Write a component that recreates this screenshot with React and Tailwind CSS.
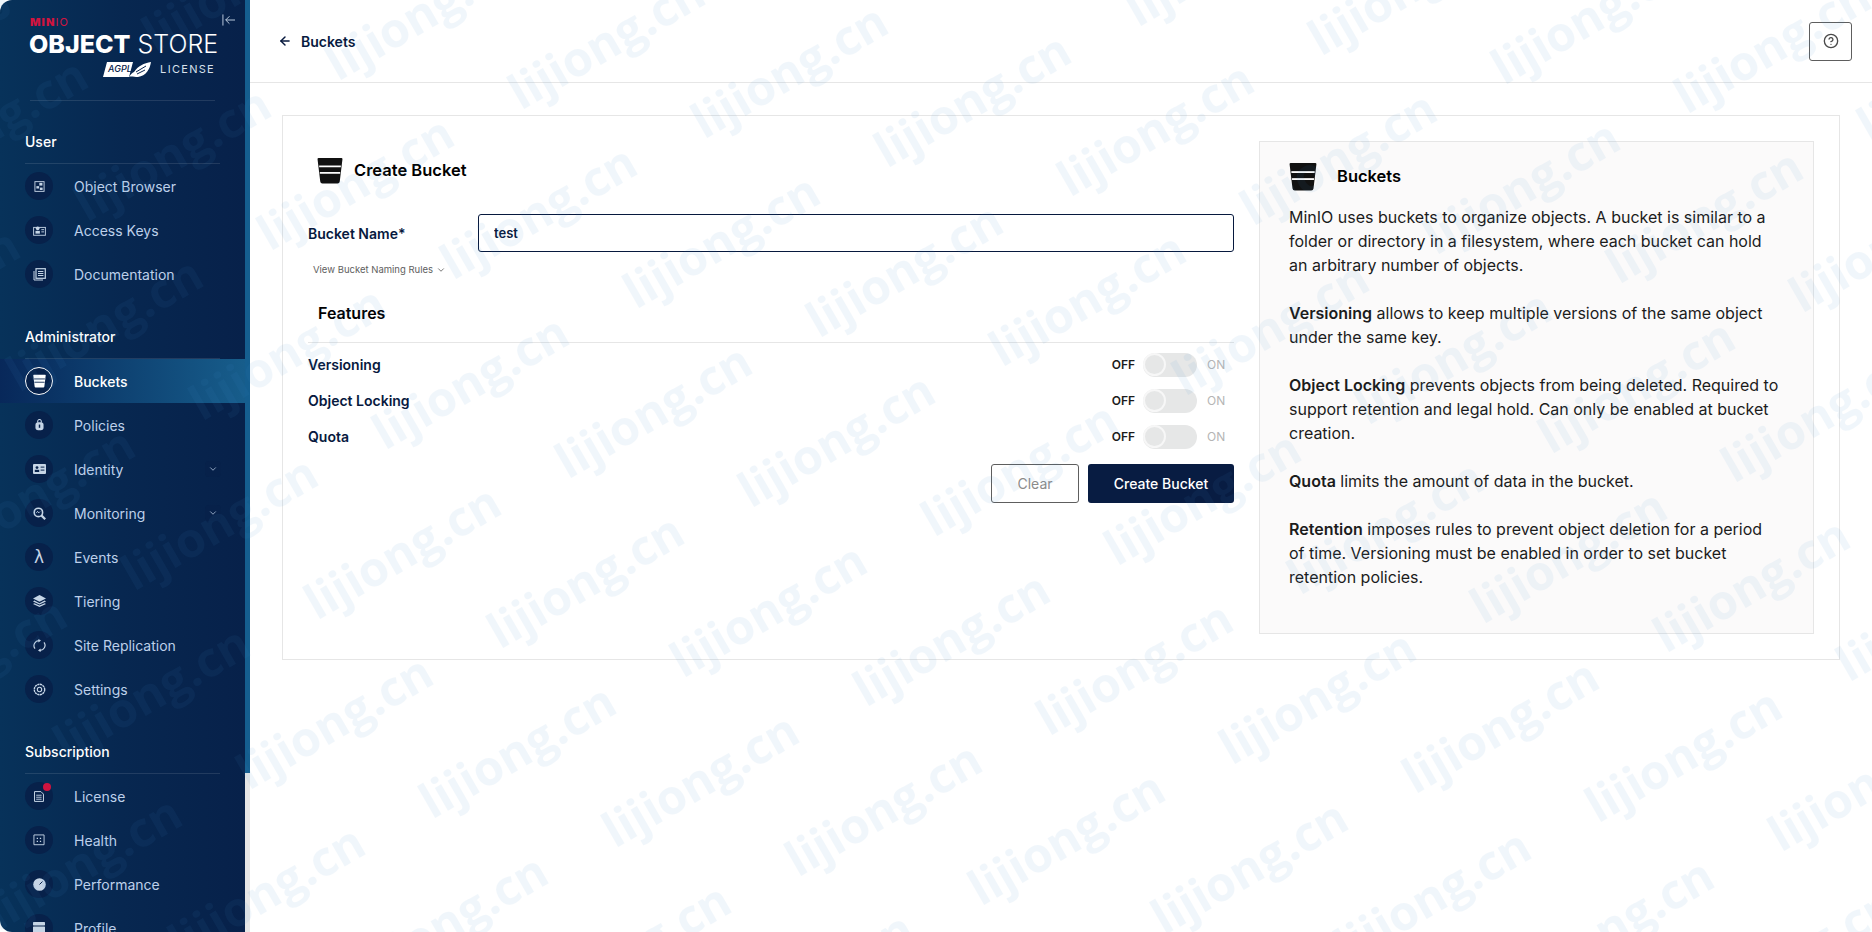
import React from 'react';
import { ArrowLeft, ChevronDown, CircleHelp } from 'lucide-react';

const BucketIcon = ({ className, bars = '#fff' }) => (
  <svg viewBox="0 0 24 24" className={className}>
    <path d="M1.5 0.5h21a1 1 0 0 1 1 1.1L21 22.2a2 2 0 0 1-2 1.8H5a2 2 0 0 1-2-1.8L0.5 1.6a1 1 0 0 1 1-1.1z" fill="currentColor" />
    <rect x="2" y="7.4" width="20" height="1.6" fill={bars} />
    <rect x="2.6" y="13.4" width="18.8" height="1.6" fill={bars} />
  </svg>
);

const NavIcon = ({ name }) => {
  const p = { fill: 'none', stroke: 'currentColor', strokeWidth: 1.6 };
  switch (name) {
    case 'browser':
      return (
        <svg viewBox="0 0 12 12" className="w-[11px] h-[11px]">
          <rect x="1" y="0.7" width="10" height="10.6" {...p} strokeWidth="1" />
          <rect x="5.8" y="2" width="3.4" height="3" fill="currentColor" />
          <rect x="2.6" y="5.6" width="3" height="2.6" fill="currentColor" />
          <rect x="6.4" y="7.2" width="3" height="2.6" fill="currentColor" />
        </svg>
      );
    case 'keys':
      return (
        <svg viewBox="0 0 14 12" className="w-[13px] h-[11px]">
          <rect x="0.6" y="2.6" width="12.8" height="8.6" {...p} strokeWidth="1" />
          <circle cx="5" cy="3.6" r="2" fill="currentColor" />
          <rect x="2.6" y="6.4" width="4.8" height="3" fill="currentColor" />
          <rect x="9" y="4.6" width="3" height="1" fill="currentColor" />
          <rect x="9" y="7" width="3" height="1" fill="currentColor" />
        </svg>
      );
    case 'docs':
      return (
        <svg viewBox="0 0 13 13" className="w-[13px] h-[13px]">
          <path d="M1 3v9h9" {...p} strokeWidth="1" />
          <rect x="3" y="0.7" width="9.3" height="9.6" {...p} strokeWidth="1.2" />
          <path d="M5 3.5h5.4M5 5.5h5.4M5 7.5h5.4" {...p} strokeWidth="1" />
        </svg>
      );
    case 'buckets':
      return <BucketIcon className="w-[13px] h-[14px] text-white" bars="#07214a" />;
    case 'policies':
      return (
        <svg viewBox="0 0 10 13" className="w-[9px] h-[12px]">
          <path d="M3 4V2.4a2 2 0 0 1 4 0V4" {...p} strokeWidth="1.2" />
          <rect x="0.5" y="3.4" width="9" height="9" rx="3" fill="currentColor" />
          <rect x="4.2" y="6" width="1.6" height="3.6" fill="#07214a" />
        </svg>
      );
    case 'identity':
      return (
        <svg viewBox="0 0 13 10" className="w-[13px] h-[10px]">
          <rect width="13" height="10" rx="1" fill="currentColor" />
          <circle cx="4" cy="3.6" r="1.4" fill="#07214a" />
          <rect x="1.8" y="5.8" width="4.4" height="2.2" fill="#07214a" />
          <rect x="7.6" y="2.6" width="3.8" height="1" fill="#07214a" />
          <rect x="7.6" y="5.6" width="3.8" height="1" fill="#07214a" />
        </svg>
      );
    case 'monitoring':
      return (
        <svg viewBox="0 0 13 13" className="w-[13px] h-[13px]">
          <circle cx="5.4" cy="5.4" r="4.2" {...p} />
          <path d="M8.6 8.6l3.6 3.6" {...p} strokeWidth="2.2" />
          <path d="M3.4 5.8l1.2-1.4 1.2 1.4 1.2-1.2" {...p} strokeWidth="1" />
        </svg>
      );
    case 'events':
      return <span className="text-[17px] leading-none font-['DejaVu_Sans',sans-serif]">λ</span>;
    case 'tiering':
      return (
        <svg viewBox="0 0 13 12" className="w-[13px] h-[12px]">
          <path d="M6.5 0L13 3.4 6.5 6.8 0 3.4z" fill="currentColor" />
          <path d="M1.4 5.6L6.5 8.2l5.1-2.6L13 6.4 6.5 9.6 0 6.4z" fill="currentColor" />
          <path d="M1.4 8.2L6.5 10.6l5.1-2.4L13 9 6.5 12 0 9z" fill="currentColor" />
        </svg>
      );
    case 'replication':
      return (
        <svg viewBox="0 0 13 13" className="w-[13px] h-[13px]">
          <path d="M2 9.6A5 5 0 0 1 6.4 1.6" {...p} strokeWidth="1.2" />
          <path d="M11 3.4A5 5 0 0 1 6.6 11.4" {...p} strokeWidth="1.2" />
          <path d="M5.4 0l2.6 1.6-2.6 1.8z" fill="currentColor" />
          <path d="M7.6 13L5 11.4l2.6-1.8z" fill="currentColor" />
        </svg>
      );
    case 'settings':
      return (
        <svg viewBox="0 0 13 13" className="w-[13px] h-[13px]">
          <circle cx="6.5" cy="6.5" r="5.2" {...p} strokeWidth="1.4" strokeDasharray="2.2 0.5" />
          <circle cx="6.5" cy="6.5" r="2.2" {...p} strokeWidth="1.1" />
        </svg>
      );
    case 'license':
      return (
        <svg viewBox="0 0 11 12" className="w-[10px] h-[11px]">
          <path d="M0.6 0.6h7l2.8 2.8v8H0.6z" {...p} strokeWidth="1.1" />
          <path d="M2.4 4.6h6M2.4 6.8h6M2.4 9h6" {...p} strokeWidth="1" />
        </svg>
      );
    case 'health':
      return (
        <svg viewBox="0 0 13 13" className="w-[12px] h-[12px]">
          <path d="M1 1h11v10.6H1z" {...p} strokeWidth="1" />
          <path d="M4 4h1.4v1.4H4zM7.4 4h1.4v1.4H7.4zM4 7.4h1.4v1.4H4zM7.4 7.4h1.4v1.4H7.4z" fill="currentColor" />
        </svg>
      );
    case 'performance':
      return (
        <svg viewBox="0 0 13 13" className="w-[13px] h-[13px]">
          <circle cx="6.5" cy="6.5" r="6.3" fill="currentColor" />
          <path d="M6.5 6.5l3-3" stroke="#07214a" strokeWidth="1" />
        </svg>
      );
    case 'profile':
      return (
        <svg viewBox="0 0 12 13" className="w-[12px] h-[13px]">
          <rect width="12" height="3.4" rx="0.6" fill="currentColor" />
          <rect y="4.4" width="12" height="8.6" rx="0.6" fill="currentColor" />
        </svg>
      );
    default:
      return null;
  }
};

const NavItem = ({ icon, label, active, chevron, dot }) => (
  <div className={`h-[44px] flex items-center pl-[25px] pr-[24px] ${active ? 'bg-gradient-to-r from-[#08285a] to-[#175d8b]' : ''}`}>
    <div className={`relative w-[28px] h-[28px] rounded-full flex items-center justify-center shrink-0 bg-[#07214a] ${active ? 'border border-white text-white' : 'text-[#c6d5e6]'}`}>
      <NavIcon name={icon} />
      {dot && <span className="absolute top-[1px] right-[2px] w-[8px] h-[8px] rounded-full bg-[#d0143f]" />}
    </div>
    <span className={`ml-[21px] flex-1 text-[14px] ${active ? 'text-white font-medium' : 'text-[#bdd0ea]'}`}>{label}</span>
    {chevron && (
      <span className="w-[16px] h-[16px] rounded-sm bg-[#07214a] flex items-center justify-center">
        <ChevronDown className="w-[10px] h-[10px] text-[#a9bdd6]" />
      </span>
    )}
  </div>
);

const NavSection = ({ title, children, className }) => (
  <div className={className}>
    <div className="mx-[25px] h-[32px] border-b border-[#ffffff1c]">
      <span className="block text-[14px] leading-[20px] font-medium text-white">{title}</span>
    </div>
    <div>{children}</div>
  </div>
);

const Sidebar = () => (
  <aside className="w-[250px] h-[932px] shrink-0 overflow-hidden relative">
    <div className="w-[245px] h-full rounded-tl-[12px] rounded-bl-[12px] overflow-hidden bg-gradient-to-r from-[#07325a] via-[#072750] to-[#07214a]">
      <div className="h-[101px] mx-[30px] border-b border-[#ffffff1c] pt-[16px]">
        <div className="text-[11px] leading-[13px] font-black tracking-[1.1px] text-[#d0143f]">
          MIN<span className="font-normal">IO</span>
        </div>
        <div className="whitespace-nowrap text-[25px] leading-[27px] text-white -ml-[1px] mt-[2px]">
          <span className="font-extrabold">OBJECT</span> <span className="font-light">STORE</span>
        </div>
        <div className="flex items-center justify-end mt-[3px] w-[185px]">
          <div className="relative w-[48px] h-[17px]">
            <svg viewBox="0 0 48 17" className="absolute inset-0 w-[48px] h-[17px]">
              <path d="M4 1h26l-4 15H0z" fill="#fff" />
              <path d="M31 11C35 5 41 2 48 1c-1 7-5 14-13 15-4 0-7-1-9 0 2-3 3-4 5-5z" fill="#fff" />
              <path d="M33 11l10-6M34 13l8-4" stroke="#07214a" strokeWidth="1" />
            </svg>
            <span className="absolute left-[5px] top-[2px] text-[9px] leading-[12px] italic font-medium text-[#07214a]">AGPL</span>
          </div>
          <span className="ml-[9px] text-[11px] leading-none tracking-[1.3px] text-[#d7e0ec]">LICENSE</span>
        </div>
      </div>
      <svg viewBox="0 0 14 12" className="absolute left-[222px] top-[14px] w-[13px] h-[12px] text-[#c6d5e6]">
        <path d="M1 0v12M14 6H4M8 2L4 6l4 4" fill="none" stroke="currentColor" strokeWidth="1" />
      </svg>
      <NavSection title="User" className="mt-[31px]">
        <NavItem icon="browser" label="Object Browser" />
        <NavItem icon="keys" label="Access Keys" />
        <NavItem icon="docs" label="Documentation" />
      </NavSection>
      <NavSection title="Administrator" className="mt-[31px]">
        <NavItem icon="buckets" label="Buckets" active />
        <NavItem icon="policies" label="Policies" />
        <NavItem icon="identity" label="Identity" chevron />
        <NavItem icon="monitoring" label="Monitoring" chevron />
        <NavItem icon="events" label="Events" />
        <NavItem icon="tiering" label="Tiering" />
        <NavItem icon="replication" label="Site Replication" />
        <NavItem icon="settings" label="Settings" />
      </NavSection>
      <NavSection title="Subscription" className="mt-[31px]">
        <NavItem icon="license" label="License" dot />
        <NavItem icon="health" label="Health" />
        <NavItem icon="performance" label="Performance" />
        <NavItem icon="profile" label="Profile" />
      </NavSection>
    </div>
    <div className="absolute left-[245px] top-0 w-[5px] h-[773px] bg-[#155e8f]" />
    <div className="absolute left-[245px] top-[773px] w-[5px] h-[159px] bg-[#e6e6e6]" />
  </aside>
);

const FeatureRow = ({ label }) => (
  <div className="h-[36px] flex items-center justify-between">
    <span className="text-[14px] font-semibold text-[#07193e]">{label}</span>
    <div className="flex items-center pt-[1px]">
      <span className="text-[12px] font-semibold text-[#1c1c1c]">OFF</span>
      <div className="ml-[8px] w-[54px] h-[24px] rounded-full bg-[#e6e7e7] flex items-center">
        <div className="w-[23px] h-[23px] rounded-full bg-[#e6e7e7] border-2 border-[#f7f7f7]" />
      </div>
      <span className="ml-[10px] w-[27px] text-[12px] text-[#b5b5b5]">ON</span>
    </div>
  </div>
);

const Help = ({ children }) => <p className="mb-[24px] text-[16px] leading-[24px] text-[#1c1c1c]">{children}</p>;

// repeated stamp over the whole page, lattice measured from the screenshot
const Watermark = () => {
  const marks = [];
  for (let b = -6; b < 6; b++) {
    for (let a = -4; a < 10; a++) {
      const x = 517 + a * 183 - b * 68;
      const y = 750 + a * 29 + b * 170;
      if (x > -120 && x < 1990 && y > -80 && y < 1010) marks.push({ x, y });
    }
  }
  return (
    <div className="absolute inset-0 overflow-hidden pointer-events-none">
      {marks.map((m, i) => (
        <span
          key={i}
          className="absolute text-[48px] leading-none font-bold whitespace-nowrap text-[#3f8fd0] opacity-[0.07] -translate-x-1/2 -translate-y-1/2 -rotate-[30deg] font-['Open_Sans',sans-serif]"
          style={{ left: m.x, top: m.y }}
        >
          lijiong.cn
        </span>
      ))}
    </div>
  );
};

export default function App() {
  return (
    <div className="relative w-[1872px] h-[932px] overflow-hidden bg-white flex font-['Inter',sans-serif]">
      <Sidebar />
      <main className="flex-1 min-w-0">
        <header className="h-[83px] border-b border-[#e6e6e6] flex items-center justify-between pl-[28px] pr-[20px]">
          <div className="flex items-center">
            <ArrowLeft className="w-[14px] h-[14px] text-[#07193e]" strokeWidth={2.5} />
            <span className="ml-[9px] text-[14px] font-semibold text-[#07193e]">Buckets</span>
          </div>
          <button className="w-[43px] h-[39px] border border-[#5e5e5e] rounded-[3px] flex items-center justify-center">
            <CircleHelp className="w-[16px] h-[16px] text-[#4a4a4a]" />
          </button>
        </header>
        <section className="mx-[32px] mt-[32px] h-[545px] border border-[#e6e6e6] flex px-[25px] pt-[25px]">
          <div className="w-[926px] shrink-0">
            <div className="flex items-center pl-[9px] pt-[15px] h-[43px]">
              <BucketIcon className="w-[26px] h-[27px] text-[#111]" />
              <span className="ml-[11px] text-[16.5px] font-semibold text-black">Create Bucket</span>
            </div>
            <div className="flex items-center mt-[30px]">
              <span className="w-[170px] text-[14px] font-semibold text-[#07193e]">Bucket Name*</span>
              <input
                readOnly
                value="test"
                className="flex-1 h-[38px] px-[15px] border border-[#07193e] rounded-[3px] text-[13px] font-semibold text-[#07193e] outline-none"
              />
            </div>
            <div className="flex items-center mt-[10px] ml-[5px] text-[9.5px] leading-[16px] text-[#5e5e5e]">
              View Bucket Naming Rules
              <ChevronDown className="ml-[3px] w-[10px] h-[10px]" />
            </div>
            <div className="mt-[17px] h-[48px] pl-[10px] pt-[6px] border-b border-[#e6e6e6] text-[16px] leading-[24px] font-semibold text-black">Features</div>
            <div className="mt-[3px]">
              <FeatureRow label="Versioning" />
              <FeatureRow label="Object Locking" />
              <FeatureRow label="Quota" />
            </div>
            <div className="flex justify-end mt-[10px]">
              <button className="w-[88px] h-[39px] border border-[#5e5e5e] rounded-[3px] text-[14px] text-[#8b8b8b]">Clear</button>
              <button className="ml-[9px] w-[146px] h-[39px] rounded-[3px] bg-[#081c42] text-[14px] font-medium text-white">Create Bucket</button>
            </div>
          </div>
          <div className="ml-[25px] w-[555px] shrink-0 h-[493px] bg-[#fbfafa] border border-[#e6e6e6] pl-[29px] pr-[32px] pt-[14px]">
            <div className="flex items-center h-[40px]">
              <BucketIcon className="w-[28px] h-[29px] text-[#111]" bars="#fbfafa" />
              <span className="ml-[20px] text-[16.5px] font-semibold text-black">Buckets</span>
            </div>
            <div className="mt-[9px]">
              <Help>MinIO uses buckets to organize objects. A bucket is similar to a folder or directory in a filesystem, where each bucket can hold an arbitrary number of objects.</Help>
              <Help><b className="font-semibold">Versioning</b> allows to keep multiple versions of the same object under the same key.</Help>
              <Help><b className="font-semibold">Object Locking</b> prevents objects from being deleted. Required to support retention and legal hold. Can only be enabled at bucket creation.</Help>
              <Help><b className="font-semibold">Quota</b> limits the amount of data in the bucket.</Help>
              <Help><b className="font-semibold">Retention</b> imposes rules to prevent object deletion for a period of time. Versioning must be enabled in order to set bucket retention policies.</Help>
            </div>
          </div>
        </section>
      </main>
      <Watermark />
    </div>
  );
}
